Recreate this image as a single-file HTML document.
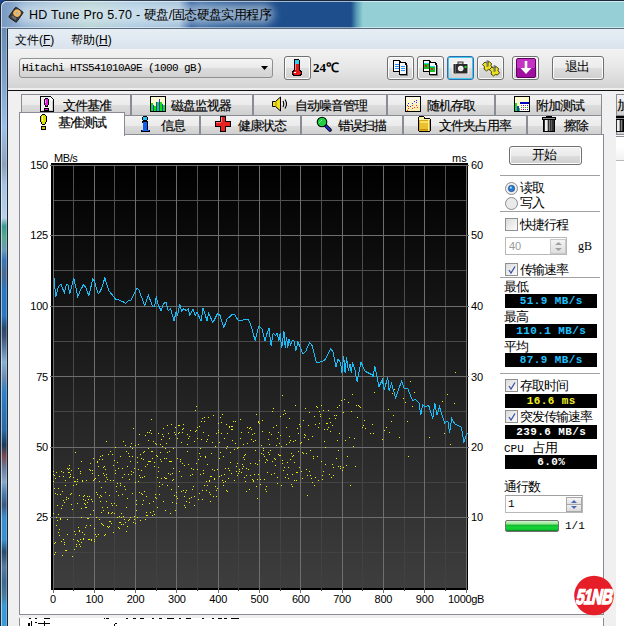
<!DOCTYPE html>
<html><head><meta charset="utf-8">
<style>
*{margin:0;padding:0;box-sizing:border-box}
html,body{width:624px;height:626px;overflow:hidden}
body{position:relative;background:#f0f0f0;font-family:"Liberation Sans",sans-serif;font-size:12px;color:#000}
.a{position:absolute}
#title{left:0;top:0;width:624px;height:28px;border-radius:6px 0 0 0;
 background:linear-gradient(90deg,#7898c0 0px,#90b0d2 20px,#aac6d8 60px,#b4d2d2 90px,#a8c8e0 130px,#9cbcd8 178px,#28589a 190px,#3a6aa4 200px,#2a5c9a 215px,#1e4f8d 240px,#1e4e8c 350px,#5aa0b8 356px,#94cfd5 362px,#96d0d6 624px);
 border-top:1px solid #18283c;border-left:1px solid #18283c;box-shadow:inset 1px 1px 0 rgba(255,255,255,.6), inset 0 -1px 0 rgba(255,255,255,.5)}
#corner{left:0;top:0;width:8px;height:8px;background:#1848a0}
#glow{left:16px;top:4px;width:258px;height:20px;border-radius:10px;background:rgba(228,238,244,.55);filter:blur(4px)}
#ttext{left:29px;top:6px;font-size:12.5px;color:#000;white-space:nowrap;letter-spacing:.2px}
#ttext span{font-size:13px;letter-spacing:-.6px;margin-left:0;position:relative;top:0}
#frameL{left:0;top:28px;width:8px;height:598px;background:linear-gradient(180deg,#6a8cb4 0px,#7ea2c8 52px,#9cc0e8 100px,#98b2d2 117px,#8aa2bc 137px,#a8c4e0 157px,#b8d0e8 190px,#3a9a90 198px,#5aa890 210px,#6a9ab8 222px,#3a78b8 232px,#4a6a90 246px,#2a78c0 262px,#2a78c0 288px,#2a4a6a 300px,#3a5070 308px,#5a7aa0 320px,#8ab0d0 334px,#6a8ab0 350px,#2e80c8 364px,#2a6aa8 402px,#1a3a5a 417px,#7a4a50 428px,#6a7a9a 440px,#8aa8c8 454px,#4a7aa8 466px,#3a5a80 477px,#3a8ed0 490px,#3a90d0 512px,#2a4a6a 524px,#5a7aa0 539px,#3a6a90 554px,#4a7a9a 567px,#3a9ad8 578px,#3a9ad8 598px);border-left:1px solid #1a2a3a;border-right:1px solid #1a2432}
#frameL:after{content:"";position:absolute;left:0;top:0;width:1px;height:598px;background:rgba(255,255,255,.55)}
#frameL:before{content:"";position:absolute;left:5px;top:0;width:1px;height:598px;background:rgba(255,255,255,.25)}
#clientTop{left:7px;top:28px;width:617px;height:1px;background:#5a6a7e}
#menubar{left:8px;top:29px;width:616px;height:20px;background:linear-gradient(180deg,#e6edf5,#dae3ed)}
.menu{top:3px;font-size:12px}
#toolbar{left:8px;top:49px;width:616px;height:40px;background:linear-gradient(180deg,#f3f3f3 0%,#e6e6e6 50%,#d3d3d3 100%);border-bottom:1px solid #eeeeee}
#tbline{left:8px;top:90px;width:616px;height:1px;background:#101010}
#main{left:8px;top:91px;width:616px;height:535px;background:#f0f0f0}
.combo{left:19px;top:58px;width:254px;height:20px;border:1px solid #8e8f8f;border-radius:3px;background:linear-gradient(180deg,#f6f6f6 0%,#e9e9e9 50%,#dcdcdc 51%,#d2d2d2 100%)}
.mono{font-family:"Liberation Mono",monospace}
.tbtn{top:56px;width:27px;height:24px;border:1px solid #707070;border-radius:3px;background:linear-gradient(180deg,#f2f2f2 0%,#ebebeb 50%,#dddddd 51%,#cfcfcf 100%);box-shadow:inset 0 0 0 1px #fcfcfc}
.tab{height:21px;border:1px solid #898c95;border-bottom:none;background:linear-gradient(180deg,#f2f2f2 0%,#ebebeb 50%,#dddddd 51%,#cfcfcf 100%);font-size:12px;white-space:nowrap}
.tab span{position:absolute;top:2px;font-size:13px;letter-spacing:-1px;-webkit-text-stroke:.15px #000}
.cjk{-webkit-text-stroke:.2px #000}
#panel{left:19px;top:134px;width:585px;height:481px;background:#fff;border:1px solid #898c95}
#panel2{left:19px;top:618px;width:585px;height:20px;background:#fff;border:1px solid #898c95;border-top:none}
.yl{position:absolute;left:0;width:48px;text-align:right;font-size:11px;line-height:14px;letter-spacing:-.2px}
.yr{position:absolute;left:471px;font-size:11px;line-height:14px;letter-spacing:-.2px}
.xl{position:absolute;top:592px;width:60px;text-align:center;font-size:11px;line-height:14px;letter-spacing:-.2px}
.xl2{position:absolute;top:592px;font-size:11px;line-height:14px;letter-spacing:-.3px}
.sep{left:500px;width:100px;height:1px;background:#a0a0a0}
.cb{left:505px;width:13px;height:13px;border:1px solid #8f8f8f;background:linear-gradient(135deg,#dcdcdc,#fbfbfb)}
.lbl{left:520px;font-size:13px;letter-spacing:-1px;white-space:nowrap;margin-top:-1px}
.box{left:505px;width:92px;height:14px;background:#000;font-family:"Liberation Mono",monospace;font-weight:bold;font-size:11px;line-height:14px;text-align:center;white-space:pre;letter-spacing:.4px;text-indent:.4px}
.cap{left:504px;font-size:13px;letter-spacing:-1px;white-space:nowrap;margin-top:-1px}
</style></head><body>
<div class="a" id="main"></div>
<div class="a" id="corner"></div>
<div class="a" id="title"></div>
<div class="a" id="glow"></div>
<!-- title icon -->
<svg class="a" style="left:6px;top:5px" width="20" height="20" viewBox="0 0 20 20">
 <g transform="rotate(35 10 9.7)">
 <rect x="5.3" y="3.5" width="9.4" height="12.4" rx="1" fill="#3c3c3e" stroke="#1e1e20" stroke-width=".9"/>
 <circle cx="9.9" cy="7.8" r="3.7" fill="#f2b65c"/><circle cx="9.9" cy="7.8" r="1.3" fill="#b0b0b8"/>
 <rect x="7.5" y="12.3" width="5" height="2" fill="#707074"/>
 </g>
</svg>
<div class="a" id="ttext">HD Tune Pro 5.70 - <span>硬盘/固态硬盘实用程序</span></div>
<div class="a" id="frameL"></div>
<div class="a" id="clientTop"></div>
<div class="a" id="menubar">
 <div class="a menu" style="left:7px">文件(<u>F</u>)</div>
 <div class="a menu" style="left:63px">帮助(<u>H</u>)</div>
</div>
<div class="a" id="toolbar"></div>
<div class="a" id="tbline"></div>

<!-- drive combo -->
<div class="a combo"></div>
<div class="a mono" style="left:22px;top:61px;font-size:11px;letter-spacing:-.6px;line-height:14px;white-space:pre;-webkit-text-stroke:.05px #000">Hitachi HTS541010A9E (1000 gB)</div>
<svg class="a" style="left:261px;top:66px" width="8" height="5"><path d="M0 0H7L3.5 4z" fill="#000"/></svg>

<!-- thermometer -->
<div class="a tbtn" style="left:284px"></div>
<svg class="a" style="left:292px;top:59px" width="11" height="18" viewBox="0 0 11 18" shape-rendering="crispEdges">
 <path d="M2 0h5v1h1v10h1v1h1v4H9v1H1v-1H0v-4h1v-1h1z" fill="#000"/>
 <path d="M3 1h4v4H3z" fill="#30d0f0"/>
 <path d="M3 5h4v7h1v1h1v2H8v1H2v-1H1v-2h1v-1h1z" fill="#e81818"/>
 <path d="M2 13h2v1H2z" fill="#fff"/><path d="M3 5h1v6H3z" fill="#ff8080"/>
</svg>
<div class="a" style="left:313px;top:61px;font-family:'Liberation Serif',serif;font-size:13px;font-weight:bold;line-height:14px">24℃</div>

<!-- toolbar buttons -->
<div class="a tbtn" style="left:387px"></div>
<svg class="a" style="left:391px;top:58px" width="19" height="19" viewBox="0 0 19 19" shape-rendering="crispEdges">
 <path d="M2 2h6l2 2v10H2z" fill="#000"/><path d="M3 3h5v2h1v8H3z" fill="#f8f8f8"/>
 <path d="M4 6h4v1H4zM4 8h4v1H4zM4 10h4v1H4z" fill="#2090ff"/>
 <path d="M8 4h6l2 2v11H8z" fill="#000"/><path d="M9 5h5v2h1v9H9z" fill="#f8f8f8"/>
 <path d="M10 8h4v1h-4zM10 10h4v1h-4zM10 12h4v1h-4z" fill="#2090ff"/>
 <path d="M16 7h1v11H9v-1h7z" fill="#808080"/>
</svg>
<div class="a tbtn" style="left:417px"></div>
<svg class="a" style="left:421px;top:58px" width="19" height="19" viewBox="0 0 19 19" shape-rendering="crispEdges">
 <path d="M2 2h6l2 2v10H2z" fill="#000"/><path d="M3 3h5v2h1v8H3z" fill="#f8f8f8"/>
 <rect x="3" y="5" width="5" height="1" fill="#20d0f0"/><rect x="3" y="6" width="5" height="5" fill="#10c020"/><rect x="4" y="7" width="2" height="2" fill="#f02010"/>
 <path d="M8 4h6l2 2v11H8z" fill="#000"/><path d="M9 5h5v2h1v9H9z" fill="#f8f8f8"/>
 <rect x="9" y="8" width="5" height="1" fill="#20d0f0"/><rect x="9" y="9" width="5" height="5" fill="#10c020"/><rect x="10" y="10" width="2" height="2" fill="#f02010"/>
 <path d="M16 7h1v11H9v-1h7z" fill="#808080"/>
</svg>
<div class="a tbtn" style="left:447px;border-color:#2c6ea8;box-shadow:inset 0 0 0 1px #48c4f0"></div>
<svg class="a" style="left:452px;top:60px" width="18" height="15" viewBox="0 0 18 15">
 <path d="M5 .5h7v2.5h4.5v11H.5V3H5z" fill="#fff"/>
 <path d="M5.5 1.5h6v2.5h4v9.5h-14V4h4z" fill="#2a2a2a"/>
 <path d="M6.5 2.5h4v1.3h-4z" fill="#e8e8e8"/>
 <path d="M3.5 4v9.5" stroke="#606060"/>
 <circle cx="8.7" cy="8.5" r="2.8" fill="#fff"/><circle cx="8.7" cy="8.5" r="2" fill="#e8e8e8"/>
 <rect x="12.5" y="6" width="2" height="2" fill="#10e020"/>
</svg>
<div class="a tbtn" style="left:477px"></div>
<svg class="a" style="left:481px;top:59px" width="20" height="18" viewBox="0 0 20 18">
 <g fill="#e8e020" stroke="#3a3000" stroke-width=".9" stroke-linejoin="round">
 <path d="M1.5 5.5l2.5-2.5 2 1 2-1.5 2.5 2 -.5 2.2 1.5 2 -2 2.3 -2.2-.5 -1.8 1.5 -2.5-2 .5-2.2z"/>
 <path d="M8.5 10.5l2.5-2.5 2 1 2-1.5 2.5 2 -.5 2.2 1.5 2 -2 2.3 -2.2-.5 -1.8 1.5 -2.5-2 .5-2.2z"/></g>
 <path d="M6.5 1.5v6M13.5 6.5v6" stroke="#303030" stroke-width="1.8"/>
 <path d="M6.2 2v5M13.2 7v5" stroke="#f0f0f0" stroke-width=".6"/>
</svg>
<div class="a tbtn" style="left:512px"></div>
<svg class="a" style="left:516px;top:58px" width="20" height="20" viewBox="0 0 20 20">
 <rect x=".5" y=".5" width="19" height="19" rx="1.5" fill="#a010a0" stroke="#600060"/>
 <rect x="1" y="1" width="18" height="9" rx="1" fill="#e050e0" opacity=".55"/>
 <path d="M10 3v11" stroke="#fff" stroke-width="2.6"/><path d="M4.5 10l5.5 6 5.5-6z" fill="#fff"/>
</svg>
<div class="a tbtn" style="left:552px;width:52px"></div>
<div class="a" style="left:551px;top:59px;width:52px;text-align:center;font-size:13px;letter-spacing:-1px;line-height:16px">退出</div>

<!-- tabs row 1 -->
<div class="a tab" style="left:21px;top:94px;width:110px"><span style="left:41px">文件基准</span></div>
<div class="a tab" style="left:131px;top:94px;width:122px"><span style="left:39px">磁盘监视器</span></div>
<div class="a tab" style="left:253px;top:94px;width:134px"><span style="left:41px">自动噪音管理</span></div>
<div class="a tab" style="left:387px;top:94px;width:108px"><span style="left:39px">随机存取</span></div>
<div class="a tab" style="left:495px;top:94px;width:107px"><span style="left:40px">附加测试</span></div>
<div class="a tab" style="left:616px;top:94px;width:30px"><span style="left:0px">加</span></div>
<!-- tabs row 2 -->
<div class="a tab" style="left:124px;top:115px;width:76px;height:20px"><span style="left:36px;top:1px">信息</span></div>
<div class="a tab" style="left:200px;top:115px;width:101px;height:20px"><span style="left:37px;top:1px">健康状态</span></div>
<div class="a tab" style="left:301px;top:115px;width:102px;height:20px"><span style="left:36px;top:1px">错误扫描</span></div>
<div class="a tab" style="left:403px;top:115px;width:124px;height:20px"><span style="left:35px;top:1px">文件夹占用率</span></div>
<div class="a tab" style="left:527px;top:115px;width:75px;height:20px"><span style="left:36px;top:1px">擦除</span></div>
<div class="a tab" style="left:616px;top:115px;width:30px;height:20px"></div>

<div class="a" id="panel2"></div>
<div class="a" id="panel"></div>
<!-- selected tab -->
<div class="a" style="left:19px;top:112px;width:106px;height:24px;background:#fff;border:1px solid #898c95;border-bottom:none"></div>
<div class="a cjk" style="left:58px;top:114px;font-size:13px;letter-spacing:-1px">基准测试</div>

<!-- tab icons -->
<svg class="a" style="left:40px;top:96px" width="16" height="16" viewBox="0 0 16 16" shape-rendering="crispEdges">
 <path d="M0 0h10l4 4v12H0z" fill="#000"/><path d="M1 1h9v3h3v11H1z" fill="#f0f0f0"/><path d="M10 1l3 3h-3z" fill="#fff"/><path d="M12 5h1v10H2v-1h10z" fill="#c8c8c8"/>
 <path d="M5 2h3v1h1v6H8v2H5V9H4V3h1z" fill="#000"/><path d="M5 3h3v6H7v1H6V9H5z" fill="#e020e0"/><path d="M5 4h1v3H5z" fill="#ff90ff"/>
 <path d="M4 12h5v3H4z" fill="#000"/><path d="M5 13h3v1H5z" fill="#e020e0"/>
</svg>
<svg class="a" style="left:150px;top:96px" width="16" height="16" viewBox="0 0 16 16" shape-rendering="crispEdges">
 <rect x="0" y="0" width="16" height="16" fill="#000"/>
 <rect x="1" y="1" width="14" height="14" fill="#fffbd0"/>
 <path d="M1 7h2v8H1zM4 10h2v5H4zM7 6h2v9H7zM10 6h2v9h-2zM13 9h2v6h-2z" fill="#10e010"/>
 <path d="M3 9h1v6H3zM6 6h1v9H6zM9 3h1v12H9zM12 8h1v7h-1z" fill="#3030f0"/>
</svg>
<svg class="a" style="left:272px;top:96px" width="16" height="16" viewBox="0 0 16 16">
 <path d="M0.5 5.5h3l5-4.5v14l-5-4.5h-3z" fill="#f0e020" stroke="#000" stroke-width="1"/>
 <path d="M4 5.5v5" stroke="#a09000"/>
 <path d="M11 5q1.5 3 0 6M13 3.5q3 4.5 0 9" fill="none" stroke="#000" stroke-width="1.1"/>
</svg>
<svg class="a" style="left:405px;top:96px" width="16" height="16" viewBox="0 0 16 16" shape-rendering="crispEdges">
 <defs><linearGradient id="ry" x1="0" y1="0" x2="0" y2="1"><stop offset="0" stop-color="#fffce8"/><stop offset="1" stop-color="#f6eca8"/></linearGradient></defs>
 <rect x="0" y="0" width="16" height="16" fill="#000"/>
 <rect x="1" y="1" width="14" height="14" fill="url(#ry)"/>
 <g fill="#2030ff"><rect x="3" y="7" width="1" height="1"/><rect x="2" y="9" width="1" height="1"/><rect x="5" y="10" width="1" height="1"/><rect x="7" y="7" width="1" height="1"/><rect x="9" y="5" width="1" height="1"/><rect x="11" y="4" width="1" height="1"/><rect x="11" y="6" width="1" height="1"/></g>
 <g fill="#ff2020"><rect x="3" y="10" width="1" height="1"/><rect x="3" y="12" width="1" height="1"/><rect x="2" y="14" width="1" height="1"/><rect x="7" y="9" width="1" height="1"/><rect x="7" y="12" width="1" height="1"/><rect x="9" y="11" width="1" height="1"/><rect x="11" y="9" width="1" height="1"/><rect x="12" y="11" width="1" height="1"/></g>
</svg>
<svg class="a" style="left:514px;top:96px" width="16" height="16" viewBox="0 0 16 16" shape-rendering="crispEdges">
 <rect x="0" y="0" width="16" height="16" fill="#000"/>
 <rect x="1" y="1" width="14" height="14" fill="#fffbd0"/>
 <path d="M1 7h2v8H1z" fill="#10e010"/><path d="M3 10h2v5H3z" fill="#3030f0"/><path d="M5 12h1v3H5z" fill="#10e010"/>
 <rect x="6" y="6" width="9" height="9" fill="#0000c0"/><rect x="6" y="8" width="9" height="7" fill="#fff"/>
 <g fill="#ff2020"><rect x="7" y="9" width="1" height="1"/><rect x="11" y="9" width="1" height="1"/><rect x="9" y="11" width="1" height="1"/><rect x="7" y="13" width="1" height="1"/><rect x="11" y="13" width="1" height="1"/></g>
 <g fill="#2020ff"><rect x="9" y="9" width="1" height="1"/><rect x="13" y="9" width="1" height="1"/><rect x="13" y="13" width="1" height="1"/><rect x="9" y="13" width="1" height="1"/></g>
 <g fill="#10c010"><rect x="7" y="11" width="1" height="1"/><rect x="11" y="11" width="1" height="1"/><rect x="13" y="11" width="1" height="1"/></g>
</svg>
<svg class="a" style="left:40px;top:114px" width="8" height="17" viewBox="0 0 8 17" shape-rendering="crispEdges">
 <path d="M2 0h3v1h1v1h1v6H6v2H5v1H2v-1H1V8H0V2h1V1h1z" fill="#000"/>
 <path d="M2 1h3v1h1v6H5v2H2V8H1V2h1z" fill="#e0e000"/><path d="M2 2h1v5H2z" fill="#ffff90"/>
 <path d="M1 12h5v4H1z" fill="#000"/><path d="M2 13h3v2H2z" fill="#c8c000"/>
</svg>
<svg class="a" style="left:141px;top:116px" width="9" height="16" viewBox="0 0 9 16" shape-rendering="crispEdges">
 <path d="M2 0h4v1h1v3H6v1H2V4H1V1h1z" fill="#000"/><path d="M2 1h4v3H2z" fill="#20c0ff"/>
 <path d="M1 5h6v9h2v2H0v-2h2V7H1z" fill="#000"/><path d="M2 6h4v9H1v0h1z" fill="#1060f0"/><path d="M1 14h7v1H1z" fill="#1060f0"/>
</svg>
<svg class="a" style="left:215px;top:116px" width="16" height="16" viewBox="0 0 16 16" shape-rendering="crispEdges">
 <path d="M5 0h6v5h5v6h-5v5H5v-5H0V5h5z" fill="#000"/>
 <path d="M6 1h4v5h5v4h-5v5H6v-5H1V6h5z" fill="#e82020"/><path d="M6 1h1v5H6zM1 6h5v1H1z" fill="#ff8080"/>
</svg>
<svg class="a" style="left:316px;top:116px" width="16" height="16" viewBox="0 0 16 16">
 <path d="M8.5 8.5l5.5 5.5" stroke="#000" stroke-width="3.6" stroke-linecap="round"/>
 <path d="M8.5 8.5l5.5 5.5" stroke="#2030d0" stroke-width="1.8" stroke-linecap="round"/>
 <circle cx="6" cy="6" r="5.3" fill="#000"/><circle cx="6" cy="6" r="4.3" fill="#20d040"/>
 <path d="M3.5 6.5l3-3" stroke="#c0ffc0" stroke-width="1" stroke-dasharray="1.2 1"/>
</svg>
<svg class="a" style="left:417px;top:116px" width="15" height="16" viewBox="0 0 15 16" shape-rendering="crispEdges">
 <path d="M2 0h5v1h1v1h5v1h1v12h-1v1H2v-1H1V1h1z" fill="#000"/>
 <path d="M2 1h5v2h6v2H2z" fill="#f8f0a0"/>
 <path d="M2 4h11v11H2z" fill="#d8a818"/>
 <path d="M3 5h8v9H3z" fill="#e8c030"/><path d="M3 5h8v2H3z" fill="#f8e060"/>
 <path d="M11 4h1v11h-1z" fill="#f8f0c0"/><path d="M3 13h8v1H3z" fill="#c09010"/>
</svg>
<svg class="a" style="left:542px;top:116px" width="14" height="16" viewBox="0 0 14 16" shape-rendering="crispEdges">
 <path d="M4 0h6v1h4v3h-1v12H1V4H0V1h4z" fill="#000"/>
 <path d="M1 2h12v1H1z" fill="#909090"/>
 <path d="M2 4h10v11H2z" fill="#303030"/>
 <path d="M3 4h2v11H3z" fill="#f0f0f0"/><path d="M5 4h1v11H5z" fill="#b0b0b0"/><path d="M7 4h1v11H7z" fill="#808080"/><path d="M9 4h1v11H9z" fill="#606060"/>
</svg>
<svg class="a" style="left:616px;top:116px" width="8" height="16" viewBox="0 0 8 16" shape-rendering="crispEdges">
 <path d="M0 0h8v16H0z" fill="#000"/><path d="M0 2h8v1H0z" fill="#909090"/><path d="M0 4h7v11H0z" fill="#303030"/><path d="M1 4h2v11H1z" fill="#f0f0f0"/><path d="M3 4h1v11H3z" fill="#b0b0b0"/><path d="M5 4h1v11H5z" fill="#808080"/>
</svg>

<!-- right strip other window -->
<div class="a" style="left:616px;top:134px;width:8px;height:492px;background:#fff;border-top:1px solid #898c95"></div>
<div class="a" style="left:616px;top:136px;width:8px;height:1px;background:#898c95"></div>
<div class="a" style="left:616px;top:146px;width:8px;height:14px;background:linear-gradient(180deg,#fff,#f2f2f2)"></div>
<div class="a" style="left:616px;top:160px;width:8px;height:1px;background:#b8b8b8"></div>

<!-- chart -->
<div class="a" style="left:0;top:0;width:624px;height:626px">
<div class="yl" style="top:158px">150</div><div class="yr" style="top:158px">60</div><div class="yl" style="top:228px">125</div><div class="yr" style="top:228px">50</div><div class="yl" style="top:299px">100</div><div class="yr" style="top:299px">40</div><div class="yl" style="top:370px">75</div><div class="yr" style="top:370px">30</div><div class="yl" style="top:440px">50</div><div class="yr" style="top:440px">20</div><div class="yl" style="top:510px">25</div><div class="yr" style="top:510px">10</div>
<div class="xl" style="left:23.0px">0</div><div class="xl" style="left:64.3px">100</div><div class="xl" style="left:105.6px">200</div><div class="xl" style="left:146.9px">300</div><div class="xl" style="left:188.2px">400</div><div class="xl" style="left:229.5px">500</div><div class="xl" style="left:270.8px">600</div><div class="xl" style="left:312.1px">700</div><div class="xl" style="left:353.4px">800</div><div class="xl" style="left:394.7px">900</div><div class="xl2" style="left:448.0px">1000gB</div>
</div>
<div class="a" style="left:54px;top:151px;font-size:11px;line-height:14px;letter-spacing:-.4px">MB/s</div>
<div class="a" style="left:452px;top:151px;font-size:11px;line-height:14px">ms</div>
<svg class="a" style="left:0;top:0" width="624" height="626">
 <defs><linearGradient id="bg" x1="0" y1="0" x2="0" y2="1">
  <stop offset="0" stop-color="#000"/><stop offset="1" stop-color="#3e3e3e"/></linearGradient></defs>
 <rect x="51" y="163" width="417" height="427" fill="#000"/>
 <rect x="53" y="165" width="413" height="423" fill="url(#bg)"/>
 <linearGradient id="gmin" gradientUnits="userSpaceOnUse" x1="0" y1="165" x2="0" y2="588"><stop offset="0" stop-color="#505050"/><stop offset="1" stop-color="#414141"/></linearGradient>
 <path d="M73 165V590M114 165V590M156 165V590M197 165V590M238 165V590M280 165V590M321 165V590M362 165V590M404 165V590M445 165V590M53 200H466M53 270H466M53 341H466M53 411H466M53 482H466M53 552H466" stroke="url(#gmin)" stroke-width="1" fill="none" shape-rendering="crispEdges" transform="translate(.5 .5)"/>
 <path d="M53 165V592M94 165V592M135 165V592M176 165V592M218 165V592M259 165V592M300 165V592M342 165V592M383 165V592M424 165V592M466 165V592M49 165H468M49 235H468M49 306H468M49 376H468M49 447H468M49 517H468" stroke="#6e6e6e" stroke-width="1" fill="none" shape-rendering="crispEdges" transform="translate(.5 .5)"/>
 <path d="" stroke="#7a7a7a" stroke-width="1" fill="none" shape-rendering="crispEdges" transform="translate(.5 0)"/>
 <path d="M53 471h1v1h-1zM53 474h1v1h-1zM53 481h1v1h-1zM53 513h1v1h-1zM54 475h1v1h-1zM54 488h1v1h-1zM54 543h1v1h-1zM54 554h1v1h-1zM55 478h1v1h-1zM55 493h1v1h-1zM55 542h1v1h-1zM55 552h1v1h-1zM56 472h1v1h-1zM56 517h1v1h-1zM56 525h1v1h-1zM57 494h1v1h-1zM57 505h1v1h-1zM57 520h1v1h-1zM58 488h1v1h-1zM58 514h1v1h-1zM58 532h1v1h-1zM59 476h1v1h-1zM59 529h1v1h-1zM59 535h1v1h-1zM60 494h1v1h-1zM60 518h1v1h-1zM60 519h1v1h-1zM61 471h1v1h-1zM61 508h1v1h-1zM61 541h1v1h-1zM62 491h1v1h-1zM62 505h1v1h-1zM62 555h1v1h-1zM63 472h1v1h-1zM63 476h1v1h-1zM63 500h1v1h-1zM63 539h1v1h-1zM64 502h1v1h-1zM64 542h1v1h-1zM64 544h1v1h-1zM65 480h1v1h-1zM65 485h1v1h-1zM65 550h1v1h-1zM66 497h1v1h-1zM66 499h1v1h-1zM66 550h1v1h-1zM67 468h1v1h-1zM67 519h1v1h-1zM67 534h1v1h-1zM68 469h1v1h-1zM68 472h1v1h-1zM68 498h1v1h-1zM69 465h1v1h-1zM69 468h1v1h-1zM69 472h1v1h-1zM69 477h1v1h-1zM70 474h1v1h-1zM70 476h1v1h-1zM70 494h1v1h-1zM71 470h1v1h-1zM71 493h1v1h-1zM71 504h1v1h-1zM72 509h1v1h-1zM72 556h1v1h-1zM73 477h1v1h-1zM73 485h1v1h-1zM73 539h1v1h-1zM74 481h1v1h-1zM74 531h1v1h-1zM74 549h1v1h-1zM75 452h1v1h-1zM75 481h1v1h-1zM75 534h1v1h-1zM76 484h1v1h-1zM76 544h1v1h-1zM76 546h1v1h-1zM77 479h1v1h-1zM77 481h1v1h-1zM77 503h1v1h-1zM77 540h1v1h-1zM78 468h1v1h-1zM78 527h1v1h-1zM78 541h1v1h-1zM79 495h1v1h-1zM79 530h1v1h-1zM79 531h1v1h-1zM79 544h1v1h-1zM80 471h1v1h-1zM80 473h1v1h-1zM80 539h1v1h-1zM80 546h1v1h-1zM81 461h1v1h-1zM81 508h1v1h-1zM81 517h1v1h-1zM81 542h1v1h-1zM82 480h1v1h-1zM82 481h1v1h-1zM82 532h1v1h-1zM83 496h1v1h-1zM83 499h1v1h-1zM83 538h1v1h-1zM83 539h1v1h-1zM84 495h1v1h-1zM84 503h1v1h-1zM84 534h1v1h-1zM85 500h1v1h-1zM85 504h1v1h-1zM85 507h1v1h-1zM85 527h1v1h-1zM86 480h1v1h-1zM86 507h1v1h-1zM86 525h1v1h-1zM87 496h1v1h-1zM87 502h1v1h-1zM87 518h1v1h-1zM88 499h1v1h-1zM88 518h1v1h-1zM88 539h1v1h-1zM89 469h1v1h-1zM89 496h1v1h-1zM89 539h1v1h-1zM90 463h1v1h-1zM90 470h1v1h-1zM90 514h1v1h-1zM90 525h1v1h-1zM91 499h1v1h-1zM91 539h1v1h-1zM91 540h1v1h-1zM92 470h1v1h-1zM92 473h1v1h-1zM92 501h1v1h-1zM93 458h1v1h-1zM93 480h1v1h-1zM93 510h1v1h-1zM94 479h1v1h-1zM94 528h1v1h-1zM94 539h1v1h-1zM94 541h1v1h-1zM95 478h1v1h-1zM95 534h1v1h-1zM96 492h1v1h-1zM96 517h1v1h-1zM96 536h1v1h-1zM97 461h1v1h-1zM97 462h1v1h-1zM97 494h1v1h-1zM98 466h1v1h-1zM98 475h1v1h-1zM98 534h1v1h-1zM99 459h1v1h-1zM99 481h1v1h-1zM99 497h1v1h-1zM99 519h1v1h-1zM100 456h1v1h-1zM100 495h1v1h-1zM100 501h1v1h-1zM101 487h1v1h-1zM101 496h1v1h-1zM101 512h1v1h-1zM101 523h1v1h-1zM102 455h1v1h-1zM102 459h1v1h-1zM102 507h1v1h-1zM102 524h1v1h-1zM103 467h1v1h-1zM103 473h1v1h-1zM103 510h1v1h-1zM103 525h1v1h-1zM104 466h1v1h-1zM104 475h1v1h-1zM104 535h1v1h-1zM105 469h1v1h-1zM105 481h1v1h-1zM105 492h1v1h-1zM105 534h1v1h-1zM106 441h1v1h-1zM106 474h1v1h-1zM106 477h1v1h-1zM106 501h1v1h-1zM107 479h1v1h-1zM107 507h1v1h-1zM107 526h1v1h-1zM108 454h1v1h-1zM108 512h1v1h-1zM108 513h1v1h-1zM108 527h1v1h-1zM109 495h1v1h-1zM109 521h1v1h-1zM109 526h1v1h-1zM110 451h1v1h-1zM110 480h1v1h-1zM110 521h1v1h-1zM111 503h1v1h-1zM111 513h1v1h-1zM111 523h1v1h-1zM112 454h1v1h-1zM112 505h1v1h-1zM112 512h1v1h-1zM113 465h1v1h-1zM113 480h1v1h-1zM113 532h1v1h-1zM114 460h1v1h-1zM114 503h1v1h-1zM114 513h1v1h-1zM115 447h1v1h-1zM115 470h1v1h-1zM115 473h1v1h-1zM116 486h1v1h-1zM116 491h1v1h-1zM116 505h1v1h-1zM117 462h1v1h-1zM117 483h1v1h-1zM117 517h1v1h-1zM118 468h1v1h-1zM118 495h1v1h-1zM118 527h1v1h-1zM119 516h1v1h-1zM119 522h1v1h-1zM119 528h1v1h-1zM120 456h1v1h-1zM120 483h1v1h-1zM120 485h1v1h-1zM120 522h1v1h-1zM121 513h1v1h-1zM121 517h1v1h-1zM121 524h1v1h-1zM122 468h1v1h-1zM122 477h1v1h-1zM122 494h1v1h-1zM123 441h1v1h-1zM123 516h1v1h-1zM123 524h1v1h-1zM124 474h1v1h-1zM124 486h1v1h-1zM124 519h1v1h-1zM125 445h1v1h-1zM125 489h1v1h-1zM125 522h1v1h-1zM126 451h1v1h-1zM126 507h1v1h-1zM126 531h1v1h-1zM127 466h1v1h-1zM127 498h1v1h-1zM127 526h1v1h-1zM128 453h1v1h-1zM128 474h1v1h-1zM128 520h1v1h-1zM129 456h1v1h-1zM129 479h1v1h-1zM129 519h1v1h-1zM130 446h1v1h-1zM130 461h1v1h-1zM130 517h1v1h-1zM131 443h1v1h-1zM131 471h1v1h-1zM131 474h1v1h-1zM132 448h1v1h-1zM132 456h1v1h-1zM132 493h1v1h-1zM133 428h1v1h-1zM133 472h1v1h-1zM133 522h1v1h-1zM134 468h1v1h-1zM134 516h1v1h-1zM134 519h1v1h-1zM135 445h1v1h-1zM135 482h1v1h-1zM135 523h1v1h-1zM136 500h1v1h-1zM136 504h1v1h-1zM136 510h1v1h-1zM137 457h1v1h-1zM137 462h1v1h-1zM137 517h1v1h-1zM138 444h1v1h-1zM138 469h1v1h-1zM138 481h1v1h-1zM139 434h1v1h-1zM139 475h1v1h-1zM139 492h1v1h-1zM140 454h1v1h-1zM140 477h1v1h-1zM140 520h1v1h-1zM141 458h1v1h-1zM141 470h1v1h-1zM141 493h1v1h-1zM142 477h1v1h-1zM142 494h1v1h-1zM142 504h1v1h-1zM143 452h1v1h-1zM143 459h1v1h-1zM143 500h1v1h-1zM144 451h1v1h-1zM144 476h1v1h-1zM144 491h1v1h-1zM145 435h1v1h-1zM145 466h1v1h-1zM145 519h1v1h-1zM146 496h1v1h-1zM146 512h1v1h-1zM146 515h1v1h-1zM147 432h1v1h-1zM147 464h1v1h-1zM147 515h1v1h-1zM148 440h1v1h-1zM148 448h1v1h-1zM148 461h1v1h-1zM149 432h1v1h-1zM149 461h1v1h-1zM149 503h1v1h-1zM150 430h1v1h-1zM150 461h1v1h-1zM150 512h1v1h-1zM151 419h1v1h-1zM151 433h1v1h-1zM151 451h1v1h-1zM152 451h1v1h-1zM152 458h1v1h-1zM152 515h1v1h-1zM153 441h1v1h-1zM153 501h1v1h-1zM153 511h1v1h-1zM154 462h1v1h-1zM154 466h1v1h-1zM154 514h1v1h-1zM155 443h1v1h-1zM155 494h1v1h-1zM155 497h1v1h-1zM156 444h1v1h-1zM156 455h1v1h-1zM156 498h1v1h-1zM157 456h1v1h-1zM157 477h1v1h-1zM157 507h1v1h-1zM158 433h1v1h-1zM158 467h1v1h-1zM158 471h1v1h-1zM159 482h1v1h-1zM159 486h1v1h-1zM159 494h1v1h-1zM160 444h1v1h-1zM160 452h1v1h-1zM160 459h1v1h-1zM161 439h1v1h-1zM161 461h1v1h-1zM161 478h1v1h-1zM162 434h1v1h-1zM162 446h1v1h-1zM162 484h1v1h-1zM163 428h1v1h-1zM163 436h1v1h-1zM163 501h1v1h-1zM164 458h1v1h-1zM164 477h1v1h-1zM165 448h1v1h-1zM165 478h1v1h-1zM165 510h1v1h-1zM166 443h1v1h-1zM166 458h1v1h-1zM166 478h1v1h-1zM167 425h1v1h-1zM167 452h1v1h-1zM167 485h1v1h-1zM168 433h1v1h-1zM168 473h1v1h-1zM169 438h1v1h-1zM169 451h1v1h-1zM169 461h1v1h-1zM170 461h1v1h-1zM170 474h1v1h-1zM170 513h1v1h-1zM171 424h1v1h-1zM171 461h1v1h-1zM171 489h1v1h-1zM172 473h1v1h-1zM172 480h1v1h-1zM172 502h1v1h-1zM173 448h1v1h-1zM173 468h1v1h-1zM173 479h1v1h-1zM174 432h1v1h-1zM174 495h1v1h-1zM175 427h1v1h-1zM175 434h1v1h-1zM175 510h1v1h-1zM176 492h1v1h-1zM176 496h1v1h-1zM176 503h1v1h-1zM177 438h1v1h-1zM177 458h1v1h-1zM177 498h1v1h-1zM178 425h1v1h-1zM178 433h1v1h-1zM178 486h1v1h-1zM179 425h1v1h-1zM179 432h1v1h-1zM179 471h1v1h-1zM180 459h1v1h-1zM180 461h1v1h-1zM181 442h1v1h-1zM181 476h1v1h-1zM181 491h1v1h-1zM182 429h1v1h-1zM182 432h1v1h-1zM182 463h1v1h-1zM183 424h1v1h-1zM183 428h1v1h-1zM183 490h1v1h-1zM184 465h1v1h-1zM184 496h1v1h-1zM184 505h1v1h-1zM185 492h1v1h-1zM185 507h1v1h-1zM186 490h1v1h-1zM186 501h1v1h-1zM187 434h1v1h-1zM187 444h1v1h-1zM187 451h1v1h-1zM188 438h1v1h-1zM188 464h1v1h-1zM189 436h1v1h-1zM189 498h1v1h-1zM189 502h1v1h-1zM190 430h1v1h-1zM190 475h1v1h-1zM191 468h1v1h-1zM191 497h1v1h-1zM192 474h1v1h-1zM192 489h1v1h-1zM193 469h1v1h-1zM193 486h1v1h-1zM194 441h1v1h-1zM194 496h1v1h-1zM194 505h1v1h-1zM195 410h1v1h-1zM195 431h1v1h-1zM196 406h1v1h-1zM196 430h1v1h-1zM196 463h1v1h-1zM197 427h1v1h-1zM197 438h1v1h-1zM197 469h1v1h-1zM198 459h1v1h-1zM198 499h1v1h-1zM199 426h1v1h-1zM199 453h1v1h-1zM199 493h1v1h-1zM200 448h1v1h-1zM200 456h1v1h-1zM200 474h1v1h-1zM201 421h1v1h-1zM201 439h1v1h-1zM202 418h1v1h-1zM202 490h1v1h-1zM202 499h1v1h-1zM203 432h1v1h-1zM203 470h1v1h-1zM203 473h1v1h-1zM204 417h1v1h-1zM204 421h1v1h-1zM204 485h1v1h-1zM205 456h1v1h-1zM205 457h1v1h-1zM206 441h1v1h-1zM206 481h1v1h-1zM206 490h1v1h-1zM207 439h1v1h-1zM207 464h1v1h-1zM207 485h1v1h-1zM208 417h1v1h-1zM208 435h1v1h-1zM209 480h1v1h-1zM209 481h1v1h-1zM209 492h1v1h-1zM210 476h1v1h-1zM210 494h1v1h-1zM210 501h1v1h-1zM211 453h1v1h-1zM211 476h1v1h-1zM212 442h1v1h-1zM212 469h1v1h-1zM213 415h1v1h-1zM213 496h1v1h-1zM214 470h1v1h-1zM214 478h1v1h-1zM214 479h1v1h-1zM215 446h1v1h-1zM215 486h1v1h-1zM216 433h1v1h-1zM216 490h1v1h-1zM216 496h1v1h-1zM217 469h1v1h-1zM217 488h1v1h-1zM218 423h1v1h-1zM218 430h1v1h-1zM218 432h1v1h-1zM219 442h1v1h-1zM219 458h1v1h-1zM219 476h1v1h-1zM220 417h1v1h-1zM220 452h1v1h-1zM221 422h1v1h-1zM221 433h1v1h-1zM221 475h1v1h-1zM222 414h1v1h-1zM222 480h1v1h-1zM223 456h1v1h-1zM223 482h1v1h-1zM223 485h1v1h-1zM224 438h1v1h-1zM224 474h1v1h-1zM225 468h1v1h-1zM225 481h1v1h-1zM226 424h1v1h-1zM226 448h1v1h-1zM226 490h1v1h-1zM227 433h1v1h-1zM227 446h1v1h-1zM227 491h1v1h-1zM228 468h1v1h-1zM228 478h1v1h-1zM229 426h1v1h-1zM229 427h1v1h-1zM229 470h1v1h-1zM230 452h1v1h-1zM230 462h1v1h-1zM231 426h1v1h-1zM231 429h1v1h-1zM231 473h1v1h-1zM232 426h1v1h-1zM232 429h1v1h-1zM232 440h1v1h-1zM233 421h1v1h-1zM234 449h1v1h-1zM234 480h1v1h-1zM235 421h1v1h-1zM235 443h1v1h-1zM236 466h1v1h-1zM236 471h1v1h-1zM237 448h1v1h-1zM237 463h1v1h-1zM237 475h1v1h-1zM238 447h1v1h-1zM238 473h1v1h-1zM239 469h1v1h-1zM239 471h1v1h-1zM240 419h1v1h-1zM240 438h1v1h-1zM241 432h1v1h-1zM241 472h1v1h-1zM242 464h1v1h-1zM242 468h1v1h-1zM243 444h1v1h-1zM243 457h1v1h-1zM243 466h1v1h-1zM244 455h1v1h-1zM244 459h1v1h-1zM244 477h1v1h-1zM245 454h1v1h-1zM245 481h1v1h-1zM246 468h1v1h-1zM246 475h1v1h-1zM246 491h1v1h-1zM247 427h1v1h-1zM247 443h1v1h-1zM248 432h1v1h-1zM248 469h1v1h-1zM249 428h1v1h-1zM249 489h1v1h-1zM250 427h1v1h-1zM250 463h1v1h-1zM250 475h1v1h-1zM251 429h1v1h-1zM251 439h1v1h-1zM252 434h1v1h-1zM252 479h1v1h-1zM253 441h1v1h-1zM253 480h1v1h-1zM253 481h1v1h-1zM254 433h1v1h-1zM254 474h1v1h-1zM255 440h1v1h-1zM255 450h1v1h-1zM255 463h1v1h-1zM256 414h1v1h-1zM256 486h1v1h-1zM257 464h1v1h-1zM257 479h1v1h-1zM257 498h1v1h-1zM258 421h1v1h-1zM258 422h1v1h-1zM258 474h1v1h-1zM259 423h1v1h-1zM259 460h1v1h-1zM260 479h1v1h-1zM260 484h1v1h-1zM261 445h1v1h-1zM261 453h1v1h-1zM262 420h1v1h-1zM262 431h1v1h-1zM263 448h1v1h-1zM263 450h1v1h-1zM263 454h1v1h-1zM264 456h1v1h-1zM264 479h1v1h-1zM265 462h1v1h-1zM265 489h1v1h-1zM266 459h1v1h-1zM266 486h1v1h-1zM266 491h1v1h-1zM267 460h1v1h-1zM267 472h1v1h-1zM268 439h1v1h-1zM268 452h1v1h-1zM269 432h1v1h-1zM269 444h1v1h-1zM269 454h1v1h-1zM270 450h1v1h-1zM271 434h1v1h-1zM271 474h1v1h-1zM272 411h1v1h-1zM272 461h1v1h-1zM273 408h1v1h-1zM273 427h1v1h-1zM274 458h1v1h-1zM274 473h1v1h-1zM275 459h1v1h-1zM275 465h1v1h-1zM276 425h1v1h-1zM276 445h1v1h-1zM277 438h1v1h-1zM277 477h1v1h-1zM277 483h1v1h-1zM278 432h1v1h-1zM278 454h1v1h-1zM279 443h1v1h-1zM279 455h1v1h-1zM280 416h1v1h-1zM280 435h1v1h-1zM280 455h1v1h-1zM281 446h1v1h-1zM281 485h1v1h-1zM282 395h1v1h-1zM282 460h1v1h-1zM282 463h1v1h-1zM283 414h1v1h-1zM283 470h1v1h-1zM284 410h1v1h-1zM284 467h1v1h-1zM285 413h1v1h-1zM285 477h1v1h-1zM286 427h1v1h-1zM286 444h1v1h-1zM287 462h1v1h-1zM287 474h1v1h-1zM288 467h1v1h-1zM288 478h1v1h-1zM289 418h1v1h-1zM289 436h1v1h-1zM289 442h1v1h-1zM290 440h1v1h-1zM290 459h1v1h-1zM291 453h1v1h-1zM291 484h1v1h-1zM292 456h1v1h-1zM292 474h1v1h-1zM292 486h1v1h-1zM293 441h1v1h-1zM293 455h1v1h-1zM294 462h1v1h-1zM294 480h1v1h-1zM295 405h1v1h-1zM295 440h1v1h-1zM296 472h1v1h-1zM296 480h1v1h-1zM297 428h1v1h-1zM297 472h1v1h-1zM298 433h1v1h-1zM298 451h1v1h-1zM299 424h1v1h-1zM299 467h1v1h-1zM300 426h1v1h-1zM300 443h1v1h-1zM301 442h1v1h-1zM301 471h1v1h-1zM302 452h1v1h-1zM302 478h1v1h-1zM303 420h1v1h-1zM303 453h1v1h-1zM304 434h1v1h-1zM304 437h1v1h-1zM305 408h1v1h-1zM305 435h1v1h-1zM306 453h1v1h-1zM306 469h1v1h-1zM307 475h1v1h-1zM307 495h1v1h-1zM308 425h1v1h-1zM308 439h1v1h-1zM309 412h1v1h-1zM309 471h1v1h-1zM310 450h1v1h-1zM310 475h1v1h-1zM311 478h1v1h-1zM312 436h1v1h-1zM312 482h1v1h-1zM313 456h1v1h-1zM313 458h1v1h-1zM314 416h1v1h-1zM314 485h1v1h-1zM315 424h1v1h-1zM315 477h1v1h-1zM316 406h1v1h-1zM317 407h1v1h-1zM317 456h1v1h-1zM318 427h1v1h-1zM318 480h1v1h-1zM319 411h1v1h-1zM319 423h1v1h-1zM320 414h1v1h-1zM320 416h1v1h-1zM321 405h1v1h-1zM321 461h1v1h-1zM322 475h1v1h-1zM322 479h1v1h-1zM323 410h1v1h-1zM323 471h1v1h-1zM324 429h1v1h-1zM324 441h1v1h-1zM325 447h1v1h-1zM325 464h1v1h-1zM326 423h1v1h-1zM327 423h1v1h-1zM327 429h1v1h-1zM328 410h1v1h-1zM328 427h1v1h-1zM329 418h1v1h-1zM329 474h1v1h-1zM330 422h1v1h-1zM330 431h1v1h-1zM331 477h1v1h-1zM332 425h1v1h-1zM332 464h1v1h-1zM333 467h1v1h-1zM333 475h1v1h-1zM334 415h1v1h-1zM335 418h1v1h-1zM336 415h1v1h-1zM336 458h1v1h-1zM337 407h1v1h-1zM337 440h1v1h-1zM338 450h1v1h-1zM338 466h1v1h-1zM339 405h1v1h-1zM339 433h1v1h-1zM340 466h1v1h-1zM340 468h1v1h-1zM341 400h1v1h-1zM342 470h1v1h-1zM343 412h1v1h-1zM343 467h1v1h-1zM344 399h1v1h-1zM345 440h1v1h-1zM346 465h1v1h-1zM347 456h1v1h-1zM348 402h1v1h-1zM349 437h1v1h-1zM350 485h1v1h-1zM351 411h1v1h-1zM352 394h1v1h-1zM353 446h1v1h-1zM354 438h1v1h-1zM355 466h1v1h-1zM356 405h1v1h-1zM357 417h1v1h-1zM358 405h1v1h-1zM359 406h1v1h-1zM360 407h1v1h-1zM362 427h1v1h-1zM363 425h1v1h-1zM364 420h1v1h-1zM365 428h1v1h-1zM370 433h1v1h-1zM372 424h1v1h-1zM373 433h1v1h-1zM374 392h1v1h-1zM382 439h1v1h-1zM384 430h1v1h-1zM386 427h1v1h-1zM388 409h1v1h-1zM389 432h1v1h-1zM391 421h1v1h-1zM392 393h1v1h-1zM393 415h1v1h-1zM394 389h1v1h-1zM399 437h1v1h-1zM403 398h1v1h-1zM405 402h1v1h-1zM407 421h1v1h-1zM408 456h1v1h-1zM410 381h1v1h-1zM412 406h1v1h-1zM414 392h1v1h-1zM416 400h1v1h-1zM429 437h1v1h-1zM442 401h1v1h-1zM444 433h1v1h-1zM447 394h1v1h-1zM450 444h1v1h-1zM454 403h1v1h-1zM455 372h1v1h-1z" fill="#f0f000"/>
 <path d="M53.5 277.0 L55.3 296.7 L57.9 286.2 L59.7 284.0 L60.9 284.4 L63.7 292.3 L65.9 284.4 L67.3 284.0 L69.4 293.2 L73.3 277.3 L77.3 296.4 L80.0 289.7 L83.1 284.0 L85.3 287.0 L88.4 295.3 L92.3 278.2 L94.1 280.9 L97.2 292.3 L98.5 292.9 L101.5 287.0 L104.3 277.3 L108.5 290.6 L110.8 293.2 L115.2 298.8 L117.9 299.4 L122.3 301.1 L125.4 302.9 L127.6 300.3 L130.2 299.9 L136.4 287.9 L138.1 288.8 L144.3 305.2 L147.8 294.6 L152.2 305.9 L154.0 306.4 L155.9 295.9 L157.1 302.9 L160.6 310.3 L162.9 303.3 L165.6 301.5 L167.7 310.0 L170.0 307.9 L173.5 320.5 L175.8 310.3 L177.0 315.3 L179.3 303.3 L181.1 310.8 L183.2 308.2 L185.8 310.0 L187.6 308.2 L189.4 314.9 L192.4 308.6 L194.7 315.3 L196.4 311.4 L200.5 320.5 L202.6 307.3 L206.5 320.2 L208.2 312.6 L212.3 322.3 L217.0 313.1 L219.3 314.4 L223.4 327.2 L226.4 318.8 L231.7 313.8 L234.3 314.4 L237.8 320.2 L241.0 319.7 L247.5 318.8 L250.2 324.1 L254.6 339.9 L258.1 325.8 L260.0 326.7 L261.8 329.0 L264.4 340.8 L266.2 333.8 L268.5 327.6 L270.6 345.3 L272.7 332.6 L275.0 335.0 L276.7 332.9 L278.5 340.0 L279.7 332.9 L281.2 347.9 L283.4 330.3 L284.7 347.0 L286.1 336.4 L287.3 347.0 L288.6 338.2 L290.0 345.3 L291.7 339.6 L293.5 340.0 L295.3 350.5 L297.4 341.4 L302.3 353.2 L305.0 351.4 L309.0 342.1 L311.5 344.9 L316.0 362.0 L318.2 362.0 L321.7 360.8 L324.3 359.4 L330.2 348.4 L332.6 351.4 L335.4 366.4 L337.6 358.5 L340.2 362.9 L341.4 372.6 L343.2 355.5 L344.6 372.6 L346.0 356.7 L347.8 369.9 L349.5 363.8 L350.8 372.6 L352.0 362.9 L354.3 368.2 L356.6 381.4 L360.5 361.5 L364.0 369.9 L365.0 371.0 L371.7 374.4 L372.6 376.1 L374.3 366.0 L375.9 373.6 L378.5 386.2 L381.8 379.4 L383.8 389.5 L387.2 376.6 L388.6 390.4 L391.1 382.8 L395.0 397.5 L401.2 380.3 L403.7 388.4 L407.1 387.9 L412.1 400.1 L414.6 398.8 L418.5 402.2 L420.2 414.8 L422.2 404.2 L424.2 406.4 L428.1 404.7 L432.3 418.1 L434.3 402.2 L436.5 414.8 L439.0 406.4 L444.1 422.4 L447.4 420.7 L449.1 432.4 L451.2 418.1 L454.2 423.2 L460.9 426.6 L463.4 441.7 L466.8 432.4" stroke="#1cbcf8" stroke-width="1" fill="none" shape-rendering="crispEdges" transform="translate(.5 .5)"/>
</svg>

<!-- right panel -->
<div class="a tbtn" style="left:509px;top:146px;width:73px;height:19px"></div>
<div class="a" style="left:507px;top:147px;width:73px;text-align:center;font-size:13px;letter-spacing:-1px;line-height:15px">开始</div>
<div class="a sep" style="top:175px"></div>
<svg class="a" style="left:505px;top:182px" width="13" height="13" viewBox="0 0 13 13">
 <circle cx="6.5" cy="6.5" r="6" fill="#f0f0f0" stroke="#8a8a8a"/>
 <circle cx="6.5" cy="6.5" r="3.2" fill="#2a7ad0" stroke="#0a3a80" stroke-width=".6"/>
 <circle cx="5.8" cy="5.6" r="1.1" fill="#b0e0ff"/>
</svg>
<div class="a lbl" style="top:180px">读取</div>
<svg class="a" style="left:505px;top:197px" width="13" height="13" viewBox="0 0 13 13">
 <circle cx="6.5" cy="6.5" r="6" fill="#eaeaea" stroke="#8a8a8a"/>
</svg>
<div class="a lbl" style="top:195px">写入</div>
<div class="a sep" style="top:211px"></div>
<div class="a cb" style="top:218px"></div>
<div class="a lbl" style="top:217px">快捷行程</div>
<div class="a" style="left:505px;top:237px;width:62px;height:18px;border:1px solid #b8b8b8;background:#fff"></div>
<div class="a" style="left:509px;top:239px;font-size:11px;color:#9a9a9a;line-height:14px">40</div>
<div class="a" style="left:550px;top:239px;width:16px;height:15px;background:linear-gradient(180deg,#f4f4f4,#dedede);border:1px solid #c8c8c8"></div>
<svg class="a" style="left:554px;top:240px" width="9" height="13"><path d="M1 5h7L4.5 2z" fill="#a0a0a0"/><path d="M1 8h7L4.5 11z" fill="#a0a0a0"/></svg>
<div class="a" style="left:578px;top:239px;font-family:'Liberation Serif',serif;font-size:12px;line-height:14px">gB</div>
<div class="a cb" style="top:263px"></div>
<svg class="a" style="left:507px;top:265px" width="10" height="10"><path d="M2 5l2 3L8 1.5" stroke="#4050a8" stroke-width="1.3" fill="none"/></svg>
<div class="a lbl" style="top:262px">传输速率</div>
<div class="a sep" style="top:277px"></div>
<div class="a cap" style="top:279px">最低</div>
<div class="a box" style="top:294px;color:#20c0ff">51.9 MB/s</div>
<div class="a cap" style="top:309px">最高</div>
<div class="a box" style="top:324px;color:#20c0ff">110.1 MB/s</div>
<div class="a cap" style="top:339px">平均</div>
<div class="a box" style="top:353px;color:#20c0ff">87.9 MB/s</div>
<div class="a sep" style="top:373px"></div>
<div class="a cb" style="top:379px"></div>
<svg class="a" style="left:507px;top:381px" width="10" height="10"><path d="M2 5l2 3L8 1.5" stroke="#4050a8" stroke-width="1.3" fill="none"/></svg>
<div class="a lbl" style="top:378px">存取时间</div>
<div class="a box" style="top:394px;color:#f0f020">16.6 ms</div>
<div class="a cb" style="top:410px"></div>
<svg class="a" style="left:507px;top:412px" width="10" height="10"><path d="M2 5l2 3L8 1.5" stroke="#4050a8" stroke-width="1.3" fill="none"/></svg>
<div class="a lbl" style="top:409px">突发传输速率</div>
<div class="a box" style="top:425px;color:#fff">239.6 MB/s</div>
<div class="a cap" style="top:440px"><span style="font-family:'Liberation Mono',monospace;font-size:11px;letter-spacing:0">CPU&nbsp;</span><span style="margin-left:3px">占用</span></div>
<div class="a box" style="top:455px;color:#fff">6.0%</div>
<div class="a cap" style="top:479px">通行数</div>
<div class="a" style="left:505px;top:495px;width:78px;height:18px;border:1px solid #b8b8b8;border-top-color:#a0a0a0;background:#fff"></div>
<div class="a mono" style="left:508px;top:497px;font-size:11px;line-height:14px">1</div>
<div class="a" style="left:566px;top:497px;width:16px;height:8px;background:linear-gradient(180deg,#f6f6f6,#e0e0e0);border:1px solid #a8a8a8"></div>
<div class="a" style="left:566px;top:504px;width:16px;height:8px;background:linear-gradient(180deg,#f0f0f0,#dadada);border:1px solid #a8a8a8"></div>
<svg class="a" style="left:569px;top:497px" width="10" height="15"><path d="M2 6h6L5 3z" fill="#4a6ab8"/><path d="M2 9h6L5 12z" fill="#4a6ab8"/></svg>
<div class="a" style="left:505px;top:520px;width:54px;height:12px;border:1px solid #707070;border-radius:2px;background:linear-gradient(180deg,#d0f4d0 0%,#90e890 30%,#18b830 42%,#10d838 70%,#10c030 85%,#0a7a1a 100%)"></div>
<div class="a mono" style="left:565px;top:519px;font-size:11px;line-height:14px">1/1</div>

<!-- partial text below -->
<svg class="a" style="left:0;top:616px" width="624" height="10" shape-rendering="crispEdges">
 <g fill="#000">
 <rect x="29" y="2" width="2" height="1"/><rect x="35" y="2" width="2" height="1"/><rect x="44" y="2" width="6" height="1"/>
 <rect x="28" y="7" width="2" height="3"/><rect x="31" y="5" width="1" height="5"/><rect x="35" y="6" width="2" height="1"/><rect x="38" y="7" width="12" height="1"/><rect x="44" y="5" width="1" height="5"/>
 <rect x="104" y="2" width="1" height="1"/><rect x="106" y="2" width="3" height="1"/><rect x="126" y="2" width="2" height="1"/><rect x="133" y="2" width="3" height="1"/><rect x="140" y="2" width="4" height="1"/><rect x="152" y="2" width="2" height="1"/><rect x="159" y="2" width="3" height="1"/><rect x="167" y="2" width="5" height="1"/>
 <rect x="170" y="2" width="4" height="1"/><rect x="179" y="2" width="2" height="1"/><rect x="186" y="2" width="3" height="1"/><rect x="189" y="2" width="2" height="1"/><rect x="202" y="2" width="2" height="1"/><rect x="212" y="2" width="2" height="1"/><rect x="218" y="2" width="4" height="1"/><rect x="224" y="2" width="3" height="1"/><rect x="231" y="2" width="8" height="1"/>
 <rect x="115" y="7" width="2" height="1"/><rect x="114" y="8" width="1" height="2"/>
 </g>
</svg>
<!-- 51NB logo -->
<svg class="a" style="left:573px;top:575px" width="42" height="42" viewBox="0 0 42 42">
 <circle cx="21" cy="20.5" r="19.8" fill="#e61e28"/>
 <g transform="translate(20.3 28.6) skewX(-12) scale(.7 1)">
 <text x="0" y="0" text-anchor="middle" font-family="Liberation Sans" font-weight="bold" font-size="21" fill="#fff" stroke="#fff" stroke-width="1.5" stroke-linejoin="round" letter-spacing="-.5">51NB</text>
 </g>
</svg>
</body></html>
